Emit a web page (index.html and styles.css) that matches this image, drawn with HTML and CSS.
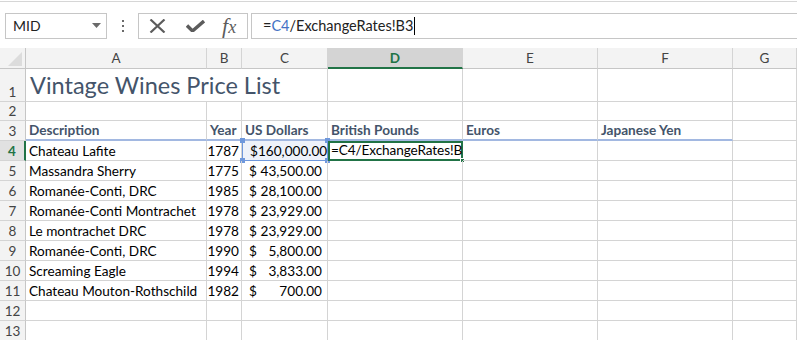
FILE: index.html
```html
<!DOCTYPE html>
<html lang="en">
<head>
    <meta charset="UTF-8">
    <title>Vintage Wines Price List</title>
    <link rel="stylesheet" href="styles.css">
</head>
<body>
    <div class="toolbar">
        <div class="namebox">
            <span>MID</span>
            <svg class="drop" width="9" height="5" viewBox="0 0 9 5"><path d="M0 0h9L4.5 5z" fill="#6a6a6a"/></svg>
        </div>
        <div class="grip"><i></i><i></i><i></i></div>
        <div class="fx-buttons">
            <svg width="17" height="14" viewBox="0 0 17 14"><path d="M1.5 0.5L15.5 13.5M15.5 0.5L1.5 13.5" stroke="#5c5c5c" stroke-width="2.2" fill="none"/></svg>
            <svg width="19" height="12" viewBox="0 0 19 12"><path d="M1 5.5L6.5 11L18 1" stroke="#5c5c5c" stroke-width="3.4" fill="none"/></svg>
            <span class="fx"><i>f</i><i>x</i></span>
        </div>
        <div class="formula">=<span class="ref">C4</span>/ExchangeRates!B3<span class="caret"></span></div>
    </div>

    <div class="sheet">
        <!-- column headers -->
        <div class="corner"><svg width="14" height="14" viewBox="0 0 14 14"><path d="M14 0V14H0z" fill="#dcdcdc"/></svg></div>
        <div class="colhead">A</div>
        <div class="colhead">B</div>
        <div class="colhead">C</div>
        <div class="colhead active">D</div>
        <div class="colhead">E</div>
        <div class="colhead">F</div>
        <div class="colhead">G</div>

        <!-- 1 -->
        <div class="rowhead">1</div>
        <div class="cell title wide">Vintage Wines Price List</div>
        <div class="cell"></div><div class="cell"></div><div class="cell"></div><div class="cell"></div>

        <!-- 2 -->
        <div class="rowhead">2</div>
        <div class="cell"></div><div class="cell"></div><div class="cell"></div><div class="cell"></div><div class="cell"></div><div class="cell"></div><div class="cell"></div>

        <!-- 3 -->
        <div class="rowhead">3</div>
        <div class="cell head">Description</div>
        <div class="cell head">Year</div>
        <div class="cell head">US Dollars</div>
        <div class="cell head">British Pounds</div>
        <div class="cell head">Euros</div>
        <div class="cell head">Japanese Yen</div>
        <div class="cell"></div>

        <!-- 4 -->
        <div class="rowhead active">4</div>
        <div class="cell">Chateau Lafite</div>
        <div class="cell num">1787</div>
        <div class="cell money ref-cell"><span>$</span><span>160,000.00</span>
            <b class="h tl"></b><b class="h tr"></b><b class="h bl"></b><b class="h br"></b>
        </div>
        <div class="cell editing"><span>=C4/ExchangeRates!B</span><b class="fill"></b></div>
        <div class="cell"></div><div class="cell"></div><div class="cell"></div>

        <!-- 5 -->
        <div class="rowhead">5</div>
        <div class="cell">Massandra Sherry</div>
        <div class="cell num">1775</div>
        <div class="cell money"><span>$</span><span>43,500.00</span></div>
        <div class="cell"></div><div class="cell"></div><div class="cell"></div><div class="cell"></div>

        <!-- 6 -->
        <div class="rowhead">6</div>
        <div class="cell">Romanée-Conti, DRC</div>
        <div class="cell num">1985</div>
        <div class="cell money"><span>$</span><span>28,100.00</span></div>
        <div class="cell"></div><div class="cell"></div><div class="cell"></div><div class="cell"></div>

        <!-- 7 -->
        <div class="rowhead">7</div>
        <div class="cell">Romanée-Conti Montrachet</div>
        <div class="cell num">1978</div>
        <div class="cell money"><span>$</span><span>23,929.00</span></div>
        <div class="cell"></div><div class="cell"></div><div class="cell"></div><div class="cell"></div>

        <!-- 8 -->
        <div class="rowhead">8</div>
        <div class="cell">Le montrachet DRC</div>
        <div class="cell num">1978</div>
        <div class="cell money"><span>$</span><span>23,929.00</span></div>
        <div class="cell"></div><div class="cell"></div><div class="cell"></div><div class="cell"></div>

        <!-- 9 -->
        <div class="rowhead">9</div>
        <div class="cell">Romanée-Conti, DRC</div>
        <div class="cell num">1990</div>
        <div class="cell money"><span>$</span><span>5,800.00</span></div>
        <div class="cell"></div><div class="cell"></div><div class="cell"></div><div class="cell"></div>

        <!-- 10 -->
        <div class="rowhead">10</div>
        <div class="cell">Screaming Eagle</div>
        <div class="cell num">1994</div>
        <div class="cell money"><span>$</span><span>3,833.00</span></div>
        <div class="cell"></div><div class="cell"></div><div class="cell"></div><div class="cell"></div>

        <!-- 11 -->
        <div class="rowhead">11</div>
        <div class="cell">Chateau Mouton-Rothschild</div>
        <div class="cell num">1982</div>
        <div class="cell money"><span>$</span><span>700.00</span></div>
        <div class="cell"></div><div class="cell"></div><div class="cell"></div><div class="cell"></div>

        <!-- 12 -->
        <div class="rowhead">12</div>
        <div class="cell"></div><div class="cell"></div><div class="cell"></div><div class="cell"></div><div class="cell"></div><div class="cell"></div><div class="cell"></div>

        <!-- 13 -->
        <div class="rowhead">13</div>
        <div class="cell"></div><div class="cell"></div><div class="cell"></div><div class="cell"></div><div class="cell"></div><div class="cell"></div><div class="cell"></div>
    </div>
</body>
</html>
```

FILE: styles.css
```css
* {
    box-sizing: border-box;
}

body {
    margin: 0;
    width: 797px;
    height: 340px;
    overflow: hidden;
    background: #fff;
    font-family: 'Lato', 'Liberation Sans', sans-serif;
    color: #000;
}

/* formula bar */
.toolbar {
    margin-top: 1px;
    border-top: 1px solid #d6d6d6;
    padding: 10px 0 9px 5px;
    display: flex;
    align-items: center;
    height: 47px;
}

.namebox {
    width: 102px;
    height: 26px;
    border: 1px solid #c6c6c6;
    display: flex;
    align-items: center;
    justify-content: space-between;
    padding: 0 5px 0 7px;
    font-size: 14px;
    color: #222;
}

.grip {
    width: 31px;
    display: flex;
    flex-direction: column;
    align-items: center;
    gap: 3px;
}

.grip i {
    width: 2px;
    height: 2px;
    background: #6a6a6a;
}

.fx-buttons {
    width: 110px;
    height: 26px;
    border: 1px solid #c6c6c6;
    display: flex;
    align-items: center;
    padding-left: 10px;
    gap: 20px;
}

.fx {
    font-family: 'Liberation Serif', serif;
    font-size: 22px;
    color: #5c5c5c;
    margin-left: -3px;
}

.fx i:last-child {
    font-size: 18px;
}

.formula {
    margin-left: 3px;
    flex: 1;
    height: 26px;
    border: 1px solid #c6c6c6;
    border-right: none;
    display: flex;
    align-items: center;
    padding-left: 11px;
    font-size: 14.5px;
    color: #222;
}

.formula .ref {
    color: #4472c4;
}

.caret {
    width: 1px;
    height: 18px;
    background: #000;
    margin-left: 1px;
}

/* grid */
.sheet {
    display: grid;
    grid-template-columns: 26px 181px 35px 86px 135px 135px 135px 64px;
    grid-template-rows: 21px 33px 19px repeat(11, 20px);
    font-size: 13.6px;
}

.corner,
.colhead,
.rowhead {
    background: #f3f3f3;
    color: #444;
    border-right: 1px solid #d4d4d4;
    border-bottom: 1px solid #c6c6c6;
}

.corner {
    display: flex;
    align-items: flex-end;
    justify-content: flex-end;
    padding: 0 3px 2px 0;
    border-right-color: #c6c6c6;
}

.colhead {
    display: flex;
    align-items: center;
    justify-content: center;
    font-size: 13.5px;
}

.colhead.active {
    background: #d4d4d4;
    color: #217346;
    font-weight: bold;
    border-bottom: 2px solid #217346;
}

.rowhead {
    display: flex;
    align-items: flex-end;
    justify-content: center;
    padding-bottom: 1px;
    font-size: 13.5px;
    border-right-color: #c6c6c6;
    border-bottom-color: #d4d4d4;
}

.rowhead.active {
    background: #e1e1e1;
    color: #217346;
    font-weight: bold;
    border-right: 2px solid #217346;
}

.cell {
    position: relative;
    border-right: 1px solid #d4d4d4;
    border-bottom: 1px solid #d4d4d4;
    padding: 0 3px 1px;
    display: flex;
    align-items: flex-end;
    white-space: nowrap;
}

.cell.wide {
    grid-column: span 3;
}

.cell.title {
    font-size: 23.5px;
    color: #44546a;
    padding-left: 4px;
    padding-bottom: 2px;
}

.cell.head {
    font-weight: bold;
    color: #44546a;
    border-bottom: 2px solid #a2b8e1;
}

.cell.num {
    justify-content: flex-end;
    padding-right: 2px;
}

.cell.money {
    justify-content: space-between;
    padding: 0 5px 1px 7px;
}

.ref-cell {
    background: #eef2fa;
    border: 1px solid #6f98dc;
    border-top: none;
}

.ref-cell .h {
    position: absolute;
    width: 5px;
    height: 5px;
    background: #6f98dc;
}

.h.tl { left: -3px; top: -3px; }
.h.tr { right: -3px; top: -3px; }
.h.bl { left: -3px; bottom: -3px; }
.h.br { right: -3px; bottom: -3px; }

.cell.editing {
    border: 2px solid #217346;
    padding-left: 1px;
    padding-right: 0;
    letter-spacing: -0.1px;
}

.editing .fill {
    position: absolute;
    right: -4px;
    bottom: -4px;
    width: 5px;
    height: 5px;
    background: #217346;
    border: 1px solid #fff;
}
```
